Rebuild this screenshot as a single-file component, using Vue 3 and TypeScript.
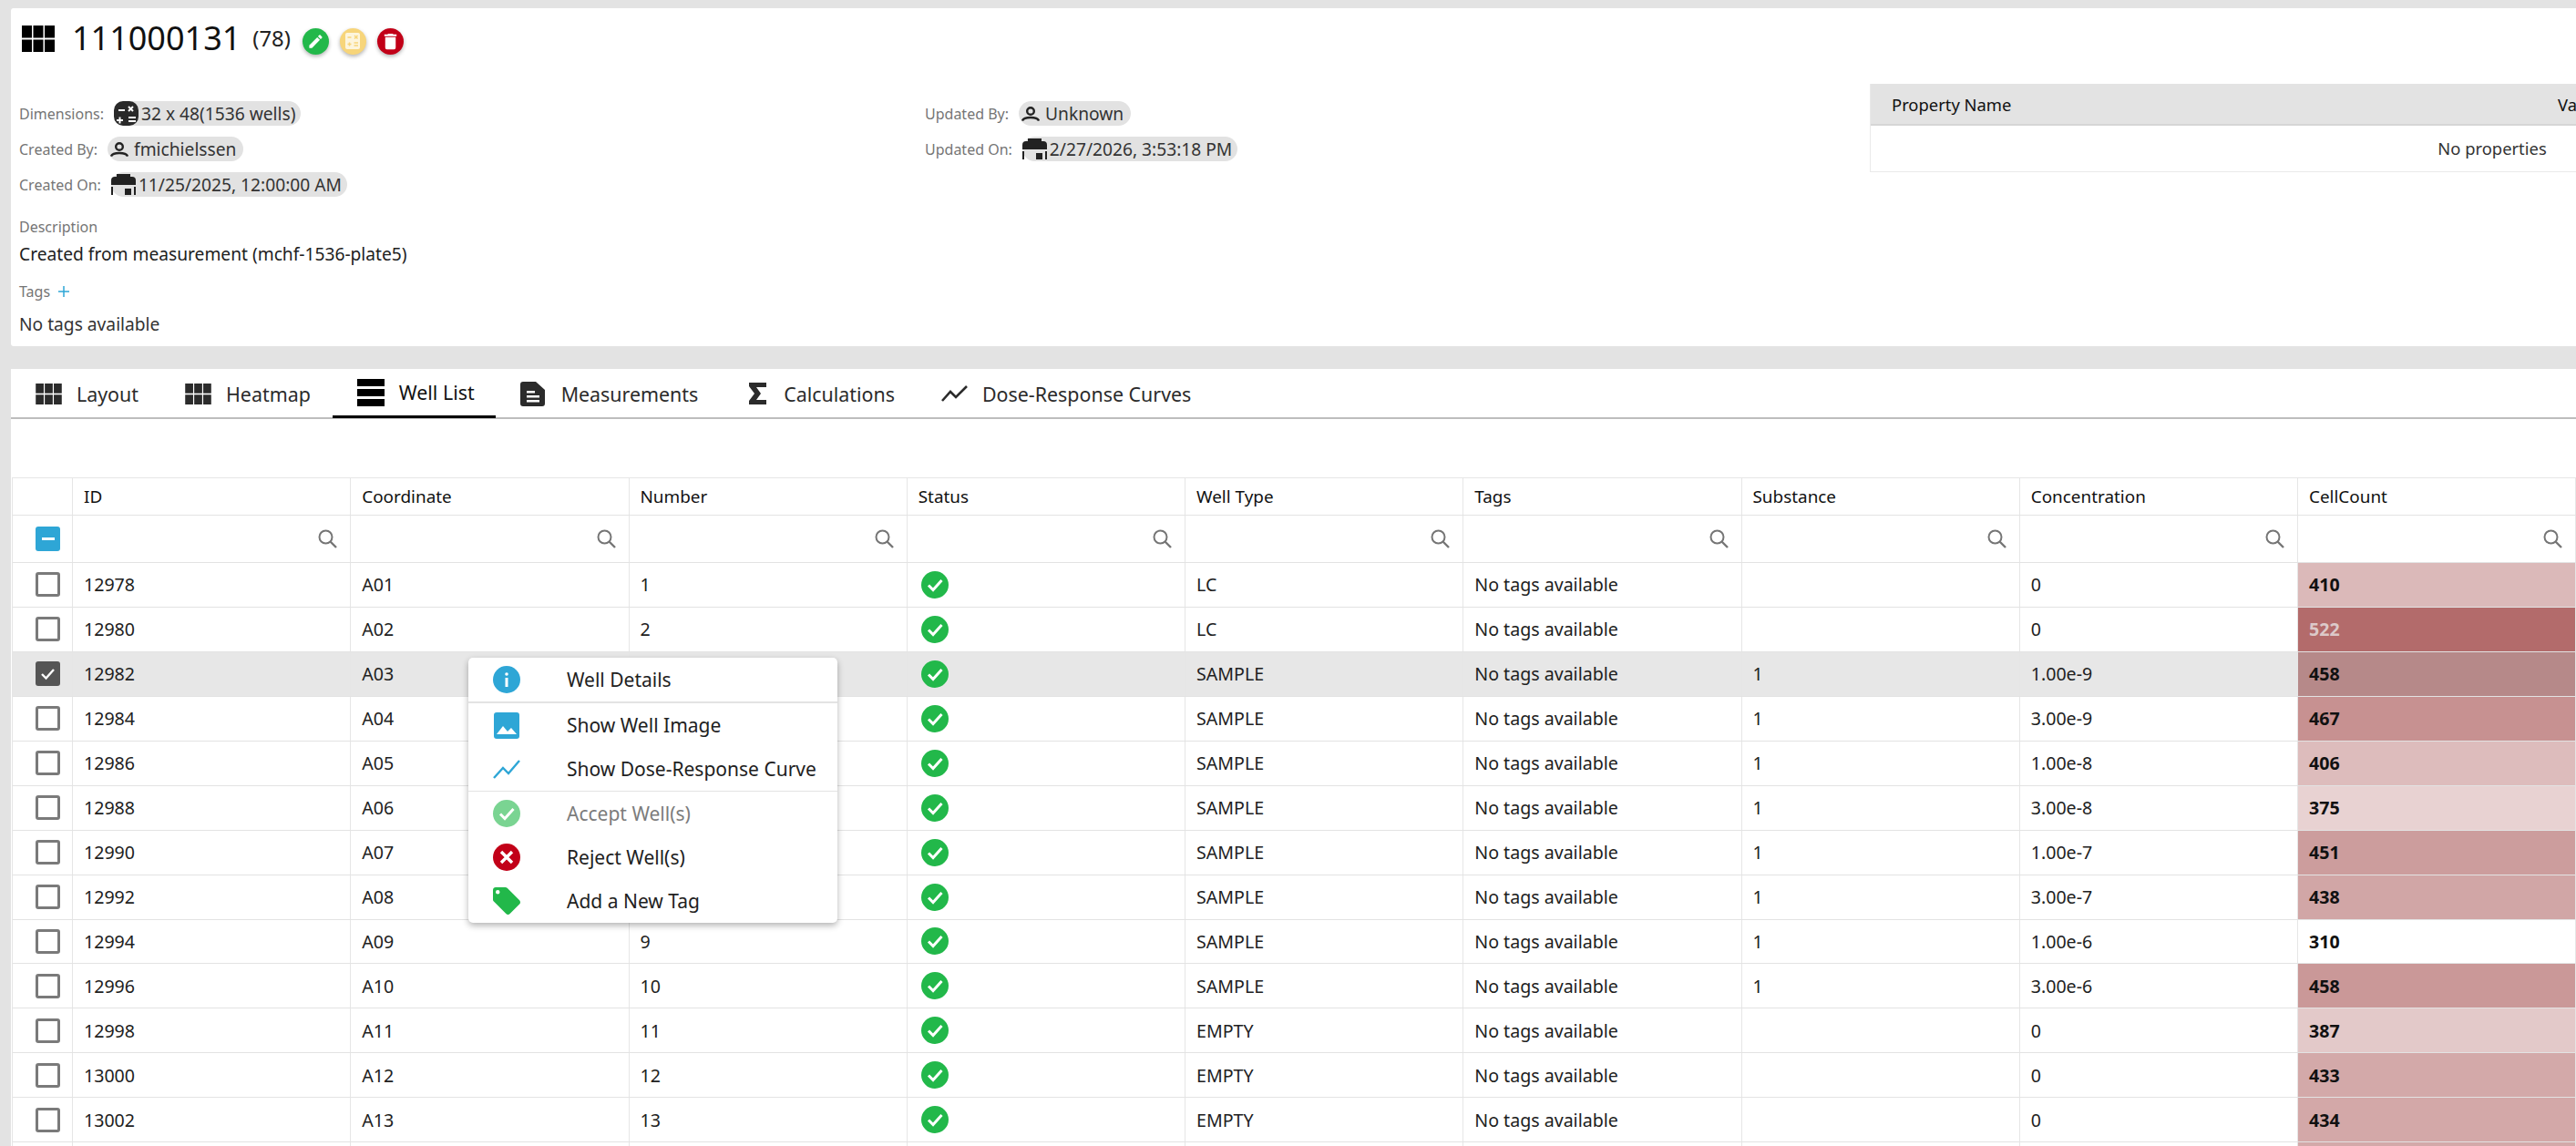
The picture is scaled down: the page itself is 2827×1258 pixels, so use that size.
<template>
  <div class="page">
    <svg class="icon-sprite" width="0" height="0" aria-hidden="true">
      <symbol id="i-grid" viewBox="0 0 36 29">
        <rect x="0" y="0" width="11" height="13.5" /><rect x="12.5" y="0" width="11" height="13.5" /><rect x="25" y="0" width="11" height="13.5" />
        <rect x="0" y="15.5" width="11" height="13.5" /><rect x="12.5" y="15.5" width="11" height="13.5" /><rect x="25" y="15.5" width="11" height="13.5" />
      </symbol>
      <symbol id="i-list" viewBox="0 0 30 30">
        <rect x="0" y="0" width="30" height="8" /><rect x="0" y="11" width="30" height="8" /><rect x="0" y="22" width="30" height="8" />
      </symbol>
      <symbol id="i-doc" viewBox="0 0 27 27">
        <path fill-rule="evenodd" d="M3 0h14l10 9v15a3 3 0 0 1-3 3H3a3 3 0 0 1-3-3V3a3 3 0 0 1 3-3ZM7 10v2.500h9V10ZM7 15v2.500h14V15ZM7 20v2.500h14V20Z" />
      </symbol>
      <symbol id="i-sigma" viewBox="0 0 19 24">
        <path d="M0 0h19v5H8l5 7-5 7h11v5H0v-4l6-8-6-8Z" />
      </symbol>
      <symbol id="i-trend" viewBox="0 0 29 18">
        <path d="M1 17 10 7l6 6L28 1" fill="none" stroke="currentColor" stroke-width="2.600" />
      </symbol>
      <symbol id="i-calc" viewBox="0 0 27 27">
        <rect width="27" height="27" rx="10" />
        <path d="M5 10h7M16 6l5 5M21 6l-5 5M16 18h8M16 22h8M3 21h7M6.500 17.500v7" stroke="#fff" stroke-width="2" fill="none" />
      </symbol>
      <symbol id="i-user" viewBox="0 0 20 16">
        <circle cx="10" cy="5" r="3.800" fill="none" stroke="currentColor" stroke-width="2.400" />
        <path d="M1 15.500c1-3 5-3.500 9-3.500s8 .5 9 3.500" fill="none" stroke="currentColor" stroke-width="2.400" />
      </symbol>
      <symbol id="i-calendar" viewBox="0 0 27 23">
        <path fill-rule="evenodd" d="M6 0h15v3h2a4 4 0 0 1 4 4v5H0V7a4 4 0 0 1 4-4h2ZM0 14h2v9H0ZM25 14h2v9h-2ZM15 16h7v7h-7Z" />
      </symbol>
      <symbol id="i-search" viewBox="0 0 21 21">
        <circle cx="8.500" cy="8.500" r="7" fill="none" stroke="currentColor" stroke-width="2" />
        <path d="m13.500 13.500 6.500 6.500" stroke="currentColor" stroke-width="2.400" />
      </symbol>
      <symbol id="i-check-circle" viewBox="0 0 30 30">
        <circle cx="15" cy="15" r="15" />
        <path d="m8 15.500 5 5 9.500-10.500" fill="none" stroke="#fff" stroke-width="3" />
      </symbol>
      <symbol id="i-pencil" viewBox="0 0 24 24">
        <path d="M20.710 7.040c.390-.390.390-1.040 0-1.410l-2.340-2.340c-.370-.390-1.020-.390-1.410 0l-1.840 1.830 3.750 3.750M3 17.250V21h3.750L17.810 9.930l-3.750-3.750L3 17.250Z" />
      </symbol>
      <symbol id="i-trash" viewBox="0 0 24 24">
        <path d="M19 4h-3.500l-1-1h-5l-1 1H5v2h14M6 19a2 2 0 0 0 2 2h8a2 2 0 0 0 2-2V7H6v12Z" />
      </symbol>
      <symbol id="i-tag" viewBox="2 2 20 20">
        <path d="M5.500 7A1.500 1.500 0 0 1 4 5.500 1.500 1.500 0 0 1 5.500 4 1.500 1.500 0 0 1 7 5.500 1.500 1.500 0 0 1 5.500 7m15.910 4.580-9-9C12.050 2.220 11.550 2 11 2H4c-1.110 0-2 .890-2 2v7c0 .550.220 1.050.590 1.410l8.990 9c.370.360.870.590 1.420.590s1.050-.230 1.410-.590l7-7c.370-.360.590-.860.590-1.410 0-.560-.230-1.060-.590-1.420Z" />
      </symbol>
    </svg>

    <section class="summary">
      <div class="summary__title">
        <svg class="summary__icon"><use href="#i-grid" /></svg>
        <h1 class="summary__name">111000131</h1>
        <span class="summary__count">(78)</span>
        <button class="round-btn round-btn--edit" type="button">
          <svg width="19" height="19"><use href="#i-pencil" /></svg>
        </button>
        <button class="round-btn round-btn--calc" type="button">
          <svg width="16" height="18" viewBox="0 0 16 18">
            <rect width="16" height="18" rx="2" fill="#fff" fill-opacity=".75" />
            <path d="M2.500 5h4M10 3l3.500 3.500M13.500 3 10 6.500M2.500 12.500h4M4.500 10.500v4M9.500 11h4.500M9.500 14h4.500" stroke="#f7d57a" stroke-width="1.500" fill="none" />
          </svg>
        </button>
        <button class="round-btn round-btn--delete" type="button">
          <svg width="23" height="23"><use href="#i-trash" /></svg>
        </button>
      </div>

      <div class="summary__body">
        <div class="summary__col">
          <div class="meta">
            <span class="meta__label">Dimensions:</span>
            <span class="chip"><svg class="chip__calc"><use href="#i-calc" /></svg>32 x 48(1536 wells)</span>
          </div>
          <div class="meta">
            <span class="meta__label">Created By:</span>
            <span class="chip chip--user"><svg class="chip__user"><use href="#i-user" /></svg>fmichielssen</span>
          </div>
          <div class="meta">
            <span class="meta__label">Created On:</span>
            <span class="chip"><svg class="chip__date"><use href="#i-calendar" /></svg>11/25/2025, 12:00:00 AM</span>
          </div>
          <div class="field-label field-label--desc">Description</div>
          <div class="field-text field-text--desc">Created from measurement (mchf-1536-plate5)</div>
          <div class="field-label field-label--tags">
            Tags
            <svg class="tags-add" viewBox="0 0 12 12"><path d="M6 0v12M0 6h12" /></svg>
          </div>
          <div class="field-text field-text--tags">No tags available</div>
        </div>

        <div class="summary__col">
          <div class="meta">
            <span class="meta__label">Updated By:</span>
            <span class="chip chip--user"><svg class="chip__user"><use href="#i-user" /></svg>Unknown</span>
          </div>
          <div class="meta">
            <span class="meta__label">Updated On:</span>
            <span class="chip"><svg class="chip__date"><use href="#i-calendar" /></svg>2/27/2026, 3:53:18 PM</span>
          </div>
        </div>

        <div class="props">
          <div class="props__head">
            <span class="props__name">Property Name</span>
            <span>Value</span>
          </div>
          <div class="props__empty">No properties</div>
        </div>
      </div>
    </section>

    <section class="content">
      <nav class="tabs">
        <a
          v-for="tab in tabs"
          :key="tab.label"
          class="tabs__item"
          :class="{ 'tabs__item--active': tab.label === 'Well List' }"
        >
          <svg :class="`tabs__icon tabs__icon--${tab.icon}`"><use :href="`#i-${tab.icon}`" /></svg>
          {{ tab.label }}
        </a>
      </nav>

      <div class="toolbar"></div>

      <div class="well-table">
        <div class="well-table__row well-table__row--head">
          <div class="cell"></div>
          <div v-for="col in columns" :key="col" class="cell">{{ col }}</div>
        </div>
        <div class="well-table__row well-table__row--filter">
          <div class="cell cell--check"><span class="checkbox checkbox--partial"></span></div>
          <div v-for="col in columns" :key="col" class="cell cell--filter">
            <svg class="search-icon"><use href="#i-search" /></svg>
          </div>
        </div>
        <div
          v-for="well in wells"
          :key="well.id"
          class="well-table__row"
          :class="{ 'well-table__row--selected': well.id === selectedId }"
        >
          <div class="cell cell--check">
            <span class="checkbox" :class="{ 'checkbox--checked': well.id === selectedId }">
              <svg v-if="well.id === selectedId" width="21" height="21" viewBox="0 0 21 21">
                <path d="m4 11 4.500 4.500L17 6" fill="none" stroke="#fff" stroke-width="2.400" />
              </svg>
            </span>
          </div>
          <div class="cell">{{ well.id }}</div>
          <div class="cell">{{ well.coord }}</div>
          <div class="cell">{{ well.number }}</div>
          <div class="cell">
            <svg class="status-icon"><use href="#i-check-circle" /></svg>
          </div>
          <div class="cell">{{ well.type }}</div>
          <div class="cell">No tags available</div>
          <div class="cell">{{ well.substance }}</div>
          <div class="cell">{{ well.conc }}</div>
          <div
            class="cell cell--count"
            :class="{ 'cell--count-high': well.count > 500 }"
            :style="{ background: heatColor(well.count, well.id === selectedId) }"
          >
            {{ well.count }}
          </div>
        </div>
        <div class="well-table__row">
          <div v-for="n in 9" :key="n" class="cell"></div>
          <div class="cell" :style="{ background: heatColor(433, false) }"></div>
        </div>
      </div>
    </section>

    <ul class="context-menu">
      <li class="context-menu__item">
        <svg class="context-menu__icon" viewBox="0 0 30 30">
          <circle cx="15" cy="15" r="15" fill="#2ea6d6" />
          <rect x="13.500" y="13" width="3" height="10" fill="#fff" />
          <circle cx="15" cy="9" r="1.800" fill="#fff" />
        </svg>
        Well Details
      </li>
      <li class="context-menu__sep context-menu__sep--thick"></li>
      <li class="context-menu__item">
        <svg class="context-menu__icon" viewBox="0 0 30 30">
          <path fill="#2ea6d6" d="M4 1h22a3 3 0 0 1 3 3v23a3 3 0 0 1-3 3H4a3 3 0 0 1-3-3V4a3 3 0 0 1 3-3Z" />
          <path fill="#fff" d="m4 25 7-9 5 6 4-4 6 7Z" />
        </svg>
        Show Well Image
      </li>
      <li class="context-menu__item">
        <svg class="context-menu__icon" viewBox="0 0 30 30">
          <path d="M1 25 11 14l6 6L29 6" fill="none" stroke="#2ea6d6" stroke-width="2.400" />
        </svg>
        Show Dose-Response Curve
      </li>
      <li class="context-menu__sep"></li>
      <li class="context-menu__item context-menu__item--disabled">
        <svg class="context-menu__icon context-menu__icon--green"><use href="#i-check-circle" /></svg>
        Accept Well(s)
      </li>
      <li class="context-menu__item">
        <svg class="context-menu__icon" viewBox="0 0 30 30">
          <circle cx="15" cy="15" r="15" fill="#c20018" />
          <path d="m9 9 12 12M21 9 9 21" stroke="#fff" stroke-width="3.400" />
        </svg>
        Reject Well(s)
      </li>
      <li class="context-menu__item">
        <svg class="context-menu__icon context-menu__icon--tag"><use href="#i-tag" /></svg>
        Add a New Tag
      </li>
    </ul>
  </div>
</template>

<script setup lang="ts">
interface Well {
  id: number;
  coord: string;
  number: number;
  type: string;
  substance: string;
  conc: string;
  count: number;
}

const selectedId = 12982;

const tabs = [
  { label: 'Layout', icon: 'grid' },
  { label: 'Heatmap', icon: 'grid' },
  { label: 'Well List', icon: 'list' },
  { label: 'Measurements', icon: 'doc' },
  { label: 'Calculations', icon: 'sigma' },
  { label: 'Dose-Response Curves', icon: 'trend' },
];

const columns = [
  'ID',
  'Coordinate',
  'Number',
  'Status',
  'Well Type',
  'Tags',
  'Substance',
  'Concentration',
  'CellCount',
];

const lc = { type: 'LC', substance: '', conc: '0' };
const empty = { type: 'EMPTY', substance: '', conc: '0' };
const sample = (conc: string) => ({ type: 'SAMPLE', substance: '1', conc });

const wells: Well[] = [
  { ...lc, count: 410 },
  { ...lc, count: 522 },
  { ...sample('1.00e-9'), count: 458 },
  { ...sample('3.00e-9'), count: 467 },
  { ...sample('1.00e-8'), count: 406 },
  { ...sample('3.00e-8'), count: 375 },
  { ...sample('1.00e-7'), count: 451 },
  { ...sample('3.00e-7'), count: 438 },
  { ...sample('1.00e-6'), count: 310 },
  { ...sample('3.00e-6'), count: 458 },
  { ...empty, count: 387 },
  { ...empty, count: 433 },
  { ...empty, count: 434 },
].map((w, i) => ({
  ...w,
  id: 12978 + i * 2,
  coord: `A${String(i + 1).padStart(2, '0')}`,
  number: i + 1,
}));

// white at the plate minimum, dark red at the maximum
const heatColor = (count: number, selected: boolean) => {
  const t = (count - 310) / (522 - 310);
  const shade = selected ? 0.9 : 1;
  const r = Math.round((255 - 76 * t) * shade);
  const g = Math.round((255 - 148 * t) * shade);
  return `rgb(${r}, ${g}, ${g})`;
};
</script>

<style scoped>
.page {
  position: relative;
  width: 2827px;
  height: 1258px;
  overflow: hidden;
  padding: 9px 0 0 12px;
  box-sizing: border-box;
  background: #e3e3e3;
  color: #212121;
  font-family: 'Noto Sans', 'Open Sans', sans-serif;
}

.icon-sprite {
  position: absolute;
}

.summary {
  height: 371px;
  padding: 18px 0 0 9px;
  box-sizing: border-box;
  overflow: hidden;
  background: #fff;
  border-radius: 3px 0 0 3px;
}

.summary__title {
  display: flex;
  align-items: center;
  height: 36px;
  padding-left: 3px;
}

.summary__icon {
  width: 36px;
  height: 29px;
  margin: -6px 19px 0 0;
  fill: #000;
}

.summary__name {
  margin: -6px 0 0;
  font-size: 36px;
  font-weight: 400;
  line-height: 36px;
  color: #111;
}

.summary__count {
  margin: -7px 13px 0 13px;
  font-size: 23.8px;
  color: #222;
}

.round-btn {
  display: flex;
  align-items: center;
  justify-content: center;
  width: 29px;
  height: 29px;
  margin: 0 12px 0 0;
  padding: 0;
  border: 0;
  border-radius: 50%;
  color: #fff;
  fill: #fff;
  box-shadow: 0 2px 4px rgba(0, 0, 0, 0.3);
}

.round-btn--edit {
  background: #22b84a;
}

.round-btn--calc {
  background: #f7d57a;
}

.round-btn--delete {
  background: #c20018;
}

.summary__body {
  display: grid;
  grid-template-columns: 994px 1037px 1366px;
  margin-top: 29px;
  align-items: start;
}

.summary__col {
  padding-top: 19px;
}

.meta {
  display: flex;
  align-items: center;
  gap: 11px;
  height: 27px;
  margin-bottom: 12px;
}

.meta__label {
  font-size: 16px;
  color: #757575;
}

.chip {
  display: flex;
  align-items: center;
  height: 27px;
  padding: 0 6px 0 0;
  border-radius: 14px;
  background: #e2e2e2;
  font-size: 19.2px;
  color: #333;
  white-space: nowrap;
}

.chip--user {
  padding-left: 3px;
  padding-right: 8px;
}

.chip__calc {
  width: 27px;
  height: 27px;
  margin-right: 3px;
  fill: #2a2a2a;
}

.chip__user {
  width: 20px;
  height: 18px;
  margin-right: 6px;
  color: #222;
}

.chip__date {
  width: 27px;
  height: 23px;
  margin-right: 3px;
  fill: #222;
}

.field-label {
  display: flex;
  align-items: center;
  height: 22px;
  font-size: 16px;
  color: #757575;
}

.field-label--desc {
  margin-top: 22px;
}

.field-label--tags {
  margin-top: 19px;
  gap: 9px;
}

.field-text {
  height: 22px;
  font-size: 19.2px;
  line-height: 22px;
}

.field-text--desc {
  margin-top: 8px;
  color: #212121;
}

.field-text--tags {
  margin-top: 14px;
  color: #333;
}

.tags-add {
  width: 12px;
  height: 12px;
  stroke: #2ea6d6;
  stroke-width: 1.5;
  fill: none;
}

.props {
  width: 1366px;
  border: 1px solid #eaeaea;
  border-top: 0;
  box-sizing: border-box;
  font-size: 18.4px;
}

.props__head {
  display: grid;
  grid-template-columns: 731px 1fr;
  align-items: center;
  height: 44px;
  background: #e3e3e3;
  border-bottom: 2px solid #d6d6d6;
  color: #111;
}

.props__head span {
  padding-left: 23px;
}

.props__empty {
  height: 50px;
  line-height: 50px;
  text-align: center;
  color: #333;
}

.content {
  margin-top: 25px;
  height: 853px;
  overflow: hidden;
  background: #fff;
}

.tabs {
  display: flex;
  height: 55px;
  box-sizing: border-box;
  border-bottom: 2px solid #bdbdbd;
}

.tabs__item {
  display: flex;
  align-items: center;
  gap: 16px;
  height: 54px;
  padding: 0 24px 0 27px;
  box-sizing: border-box;
  font-size: 21.4px;
  color: #2b2b2b;
}

.tabs__item--active {
  padding-right: 23px;
  color: #111;
  border-bottom: 3px solid #000;
}

.tabs__icon {
  fill: #2b2b2b;
  color: #2b2b2b;
}

.tabs__icon--grid {
  width: 29px;
  height: 23px;
}

.tabs__icon--list {
  width: 30px;
  height: 30px;
  fill: #000;
}

.tabs__icon--doc {
  width: 27px;
  height: 27px;
  margin-right: 2px;
}

.tabs__icon--sigma {
  width: 19px;
  height: 24px;
  margin: 0 3px 0 5px;
}

.tabs__icon--trend {
  width: 29px;
  height: 18px;
}

.toolbar {
  height: 64px;
}

.well-table {
  margin-left: 1px;
  border-top: 1px solid #e6e6e6;
  border-left: 1px solid #e6e6e6;
}

.well-table__row {
  display: grid;
  grid-template-columns: 66px repeat(9, 305.25px);
  height: 48.95px;
  box-sizing: border-box;
  border-bottom: 1px solid #e3e3e3;
  font-size: 19.6px;
}

.well-table__row--head {
  height: 41px;
  font-size: 18.9px;
  color: #111;
}

.well-table__row--filter {
  height: 52px;
}

.well-table__row--selected {
  background: #e7e7e7;
}

.cell {
  display: flex;
  align-items: center;
  padding-left: 12px;
  box-sizing: border-box;
  border-right: 1px solid #e6e6e6;
  white-space: nowrap;
}

.cell--check {
  padding-left: 25px;
}

.cell--filter {
  justify-content: flex-end;
  padding: 0 14px 0 0;
}

.cell--count {
  font-weight: 700;
  color: #111;
}

.cell--count-high {
  color: #dcc9c9;
}

.checkbox {
  display: flex;
  align-items: center;
  justify-content: center;
  width: 27px;
  height: 27px;
  box-sizing: border-box;
  border: 3px solid #7a7a7a;
  border-radius: 3px;
  background: #fff;
}

.checkbox--partial {
  position: relative;
  border: 0;
  background: #2ea6d6;
}

.checkbox--partial::after {
  content: '';
  width: 14px;
  height: 3px;
  background: #fff;
}

.checkbox--checked {
  border: 0;
  background: #555;
}

.search-icon {
  width: 21px;
  height: 21px;
  color: #757575;
}

.status-icon {
  width: 30px;
  height: 30px;
  margin-left: 3px;
  fill: #22b84a;
}

.context-menu {
  position: absolute;
  top: 722px;
  left: 514px;
  width: 405px;
  margin: 0;
  padding: 0;
  list-style: none;
  background: #fff;
  border-radius: 5px;
  box-shadow: 0 3px 7px rgba(0, 0, 0, 0.3);
  font-size: 21px;
  color: #212121;
}

.context-menu__item {
  display: flex;
  align-items: center;
  height: 48px;
  padding-left: 27px;
}

.context-menu__item--disabled {
  color: #7c7c7c;
}

.context-menu__item--disabled .context-menu__icon {
  opacity: 0.6;
}

.context-menu__icon {
  width: 30px;
  height: 30px;
  margin-right: 51px;
}

.context-menu__icon--green {
  fill: #22b84a;
}

.context-menu__icon--tag {
  fill: #22b84a;
}

.context-menu__sep {
  height: 1px;
  background: #e3e3e3;
}

.context-menu__sep--thick {
  height: 2px;
}
</style>

<style>
body {
  margin: 0;
  overflow: hidden;
  background: #e3e3e3;
}
</style>
